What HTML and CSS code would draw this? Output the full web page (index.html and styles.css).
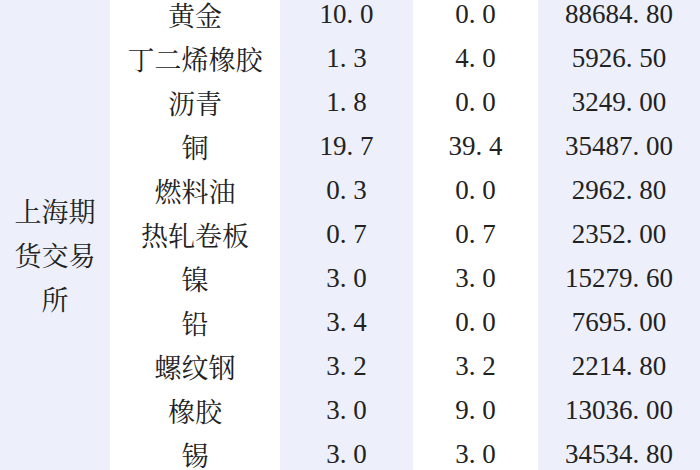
FILE: index.html
```html
<!DOCTYPE html>
<html lang="zh-CN">
<head>
<meta charset="utf-8">
<title>上海期货交易所</title>
<link rel="stylesheet" href="styles.css">
</head>
<body>
<div class="table">
  <div class="cell c1 exch">上海期<br>货交易<br>所</div>

  <div class="cell c2">黄金</div>
  <div class="cell c3">10<span class="pt">.</span>0</div>
  <div class="cell c4">0<span class="pt">.</span>0</div>
  <div class="cell c5">88684<span class="pt">.</span>80</div>

  <div class="cell c2">丁二烯橡胶</div>
  <div class="cell c3">1<span class="pt">.</span>3</div>
  <div class="cell c4">4<span class="pt">.</span>0</div>
  <div class="cell c5">5926<span class="pt">.</span>50</div>

  <div class="cell c2">沥青</div>
  <div class="cell c3">1<span class="pt">.</span>8</div>
  <div class="cell c4">0<span class="pt">.</span>0</div>
  <div class="cell c5">3249<span class="pt">.</span>00</div>

  <div class="cell c2">铜</div>
  <div class="cell c3">19<span class="pt">.</span>7</div>
  <div class="cell c4">39<span class="pt">.</span>4</div>
  <div class="cell c5">35487<span class="pt">.</span>00</div>

  <div class="cell c2">燃料油</div>
  <div class="cell c3">0<span class="pt">.</span>3</div>
  <div class="cell c4">0<span class="pt">.</span>0</div>
  <div class="cell c5">2962<span class="pt">.</span>80</div>

  <div class="cell c2">热轧卷板</div>
  <div class="cell c3">0<span class="pt">.</span>7</div>
  <div class="cell c4">0<span class="pt">.</span>7</div>
  <div class="cell c5">2352<span class="pt">.</span>00</div>

  <div class="cell c2">镍</div>
  <div class="cell c3">3<span class="pt">.</span>0</div>
  <div class="cell c4">3<span class="pt">.</span>0</div>
  <div class="cell c5">15279<span class="pt">.</span>60</div>

  <div class="cell c2">铅</div>
  <div class="cell c3">3<span class="pt">.</span>4</div>
  <div class="cell c4">0<span class="pt">.</span>0</div>
  <div class="cell c5">7695<span class="pt">.</span>00</div>

  <div class="cell c2">螺纹钢</div>
  <div class="cell c3">3<span class="pt">.</span>2</div>
  <div class="cell c4">3<span class="pt">.</span>2</div>
  <div class="cell c5">2214<span class="pt">.</span>80</div>

  <div class="cell c2">橡胶</div>
  <div class="cell c3">3<span class="pt">.</span>0</div>
  <div class="cell c4">9<span class="pt">.</span>0</div>
  <div class="cell c5">13036<span class="pt">.</span>00</div>

  <div class="cell c2">锡</div>
  <div class="cell c3">3<span class="pt">.</span>0</div>
  <div class="cell c4">3<span class="pt">.</span>0</div>
  <div class="cell c5">34534<span class="pt">.</span>80</div>
</div>
</body>
</html>
```

FILE: styles.css
```css
html, body {
  margin: 0;
  padding: 0;
  background: #edf0fa;
  overflow: hidden;
}

.table {
  display: grid;
  grid-template-columns: 110px 170px 133px 125px 162px;
  grid-auto-rows: 44px;
  margin-top: -8px;
  font-family: "Liberation Serif", "Noto Serif CJK SC", "Noto Sans CJK SC", serif;
  font-size: 27px;
  color: #222;
}

.cell {
  display: flex;
  align-items: center;
  justify-content: center;
  white-space: nowrap;
}

.c1, .c3, .c5 {
  background: #edf0fa;
}

.c2, .c4 {
  background: #ffffff;
}

.c2 { grid-column: 2; }
.c3 { grid-column: 3; }
.c4 { grid-column: 4; }
.c5 { grid-column: 5; }

.exch {
  grid-column: 1;
  grid-row: 1 / span 11;
  display: block;
  text-align: center;
  line-height: 44px;
  padding-top: 199px;
}

.pt {
  display: inline-block;
  width: 0.5em;
  text-align: left;
}
```
